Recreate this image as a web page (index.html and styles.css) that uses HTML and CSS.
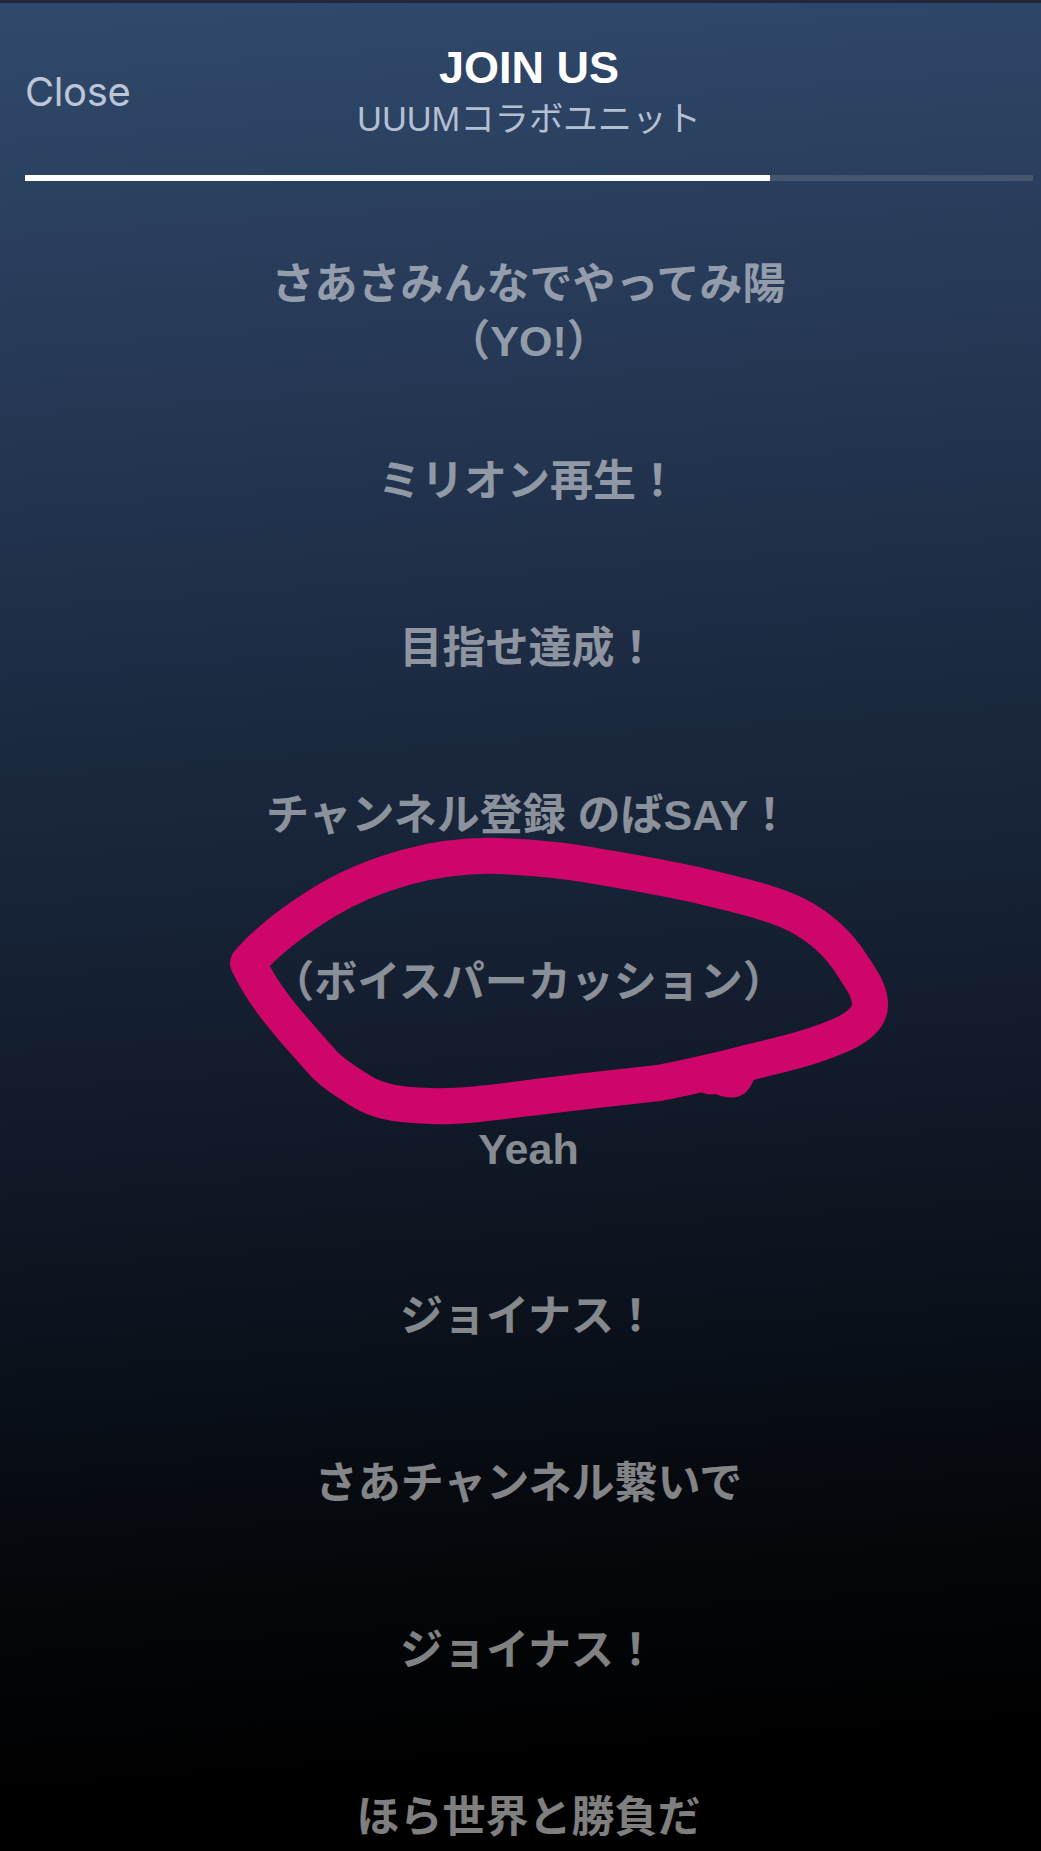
FILE: index.html
```html
<!DOCTYPE html>
<html lang="ja">
<head>
<meta charset="utf-8">
<title>JOIN US</title>
<link rel="stylesheet" href="styles.css">
</head>
<body>
<main class="screen">
  <header class="head">
    <a class="close">Close</a>
    <div class="titles">
      <h1 class="title">JOIN US</h1>
      <p class="artist">UUUMコラボユニット</p>
    </div>
  </header>
  <div class="progress"><div class="progress-fill"></div></div>
  <section class="lyrics">
    <p class="line line-first">さあさみんなでやってみ陽<br>（YO!）</p>
    <p class="line">ミリオン再生！</p>
    <p class="line">目指せ達成！</p>
    <p class="line">チャンネル登録 のばSAY！</p>
    <p class="line">（ボイスパーカッション）</p>
    <p class="line">Yeah</p>
    <p class="line">ジョイナス！</p>
    <p class="line">さあチャンネル繋いで</p>
    <p class="line">ジョイナス！</p>
    <p class="line">ほら世界と勝負だ</p>
  </section>
  <svg class="scribble" viewBox="0 0 1041 1851" aria-hidden="true">
    <path class="scribble-stroke" d="M248 963C270 938 295 920 324 902C350 886 378 875 407 867C437 859 468 855 498 856C530 857 560 860 590 865C630 872 668 878 705 887C738 895 770 902 797 915C822 928 840 946 852 965C861 979 870 990 870 1005C870 1017 858 1027 843 1034C815 1047 783 1054 751 1062C720 1070 690 1077 659 1083C613 1088 567 1093 521 1099C490 1103 460 1107 430 1106C402 1105 380 1103 361 1091C345 1081 335 1075 324 1064C295 1031 265 1000 248 963Z"/>
    <path class="scribble-blob" d="M690 1075C695 1092 705 1096 716 1094C724 1098 738 1100 746 1092C752 1086 755 1078 756 1070Z"/>
  </svg>
</main>
</body>
</html>
```
FILE: styles.css
```css
* { box-sizing: border-box; }
html, body { margin: 0; height: 100%; }
body { background: #000; overflow: hidden; }
.screen {
  position: relative;
  width: 1041px;
  height: 1851px;
  overflow: hidden;
  border-top: 3px solid #22283c;
  padding: 0 8px 0 25px;
  background: linear-gradient(176deg, #30496b 0%, #2a3f5e 12%, #23344f 25%, #1a283e 40%, #131d2e 55%, #0b121c 70%, #040609 84%, #000 94%);
  font-family: "Liberation Sans", "Noto Sans CJK JP", sans-serif;
}
.head {
  position: relative;
  display: flex;
  justify-content: center;
  height: 172px;
  padding-top: 39px;
}
.close {
  position: absolute;
  left: 0;
  top: 66px;
  color: #bcc6d8;
  font-size: 40px;
  line-height: 46px;
  font-family: "Inter", "Liberation Sans", sans-serif;
  letter-spacing: -.4px;
}
.titles { text-align: center; }
.title {
  margin: 0;
  color: #fff;
  font-size: 45px;
  line-height: 52px;
  font-weight: 700;
}
.artist {
  margin: 2px 0 0;
  color: #b3bfd3;
  font-size: 34.4px;
  line-height: 46px;
}
.progress {
  height: 6px;
  background: #46566f;
}
.progress-fill {
  width: 745px;
  height: 6px;
  background: #fff;
}
.lyrics {
  display: flex;
  flex-direction: column;
  gap: 110px;
  margin: 75px 0 0 -25px;
  width: 1041px;
  padding-left: 16px;
}
.line {
  margin: 0;
  text-align: center;
  color: rgba(255, 255, 255, .5);
  font-size: 43px;
  line-height: 57px;
  font-weight: 700;
}
.line-first { margin-bottom: -27px; }
.scribble {
  position: absolute;
  left: 0;
  top: -3px;
  width: 1041px;
  height: 1851px;
}
.scribble-stroke {
  fill: none;
  stroke: #ce066a;
  stroke-width: 36px;
  stroke-linejoin: round;
}
.scribble-blob { fill: #ce066a; }
```
